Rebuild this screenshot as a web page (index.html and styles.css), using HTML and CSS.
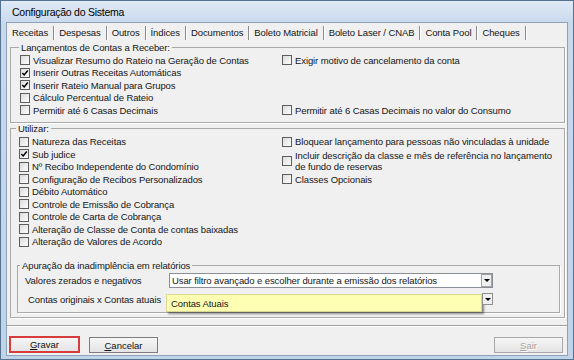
FILE: index.html
```html
<!DOCTYPE html>
<html lang="pt-BR">
<head>
  <meta charset="UTF-8" />
  <title>Configuração do Sistema</title>
  <link rel="stylesheet" href="styles.css">
</head>
<body>
  <div class="window">
    <div class="titlebar">Configuração do Sistema</div>
    <div class="client">
      <div class="tabs">
        <span class="tab active">Receitas</span>
        <span class="tab">Despesas</span>
        <span class="tab">Outros</span>
        <span class="tab">Índices</span>
        <span class="tab">Documentos</span>
        <span class="tab">Boleto Matricial</span>
        <span class="tab">Boleto Laser / CNAB</span>
        <span class="tab">Conta Pool</span>
        <span class="tab">Cheques</span>
      </div>

      <div class="page">
        <fieldset class="group lanc">
          <legend>Lançamentos de Contas a Receber:</legend>
          <div class="cols">
            <div class="col left">
              <label class="chk"><span class="box"></span>Visualizar Resumo do Rateio na Geração de Contas</label>
              <label class="chk"><span class="box on"><svg viewBox="0 0 8 8"><path d="M1.3 3.9 L3.2 5.9 L6.8 1.5"/></svg></span>Inserir Outras Receitas Automáticas</label>
              <label class="chk"><span class="box on"><svg viewBox="0 0 8 8"><path d="M1.3 3.9 L3.2 5.9 L6.8 1.5"/></svg></span>Inserir Rateio Manual para Grupos</label>
              <label class="chk"><span class="box"></span>Cálculo Percentual de Rateio</label>
              <label class="chk"><span class="box"></span>Permitir até 6 Casas Decimais</label>
            </div>
            <div class="col right spread">
              <label class="chk"><span class="box"></span>Exigir motivo de cancelamento da conta</label>
              <label class="chk"><span class="box"></span>Permitir até 6 Casas Decimais no valor do Consumo</label>
            </div>
          </div>
        </fieldset>

        <fieldset class="group util">
          <legend>Utilizar:</legend>
          <div class="cols">
            <div class="col left">
              <label class="chk"><span class="box"></span>Natureza das Receitas</label>
              <label class="chk"><span class="box on"><svg viewBox="0 0 8 8"><path d="M1.3 3.9 L3.2 5.9 L6.8 1.5"/></svg></span>Sub judice</label>
              <label class="chk"><span class="box"></span>Nº Recibo Independente do Condomínio</label>
              <label class="chk"><span class="box"></span>Configuração de Recibos Personalizados</label>
              <label class="chk"><span class="box"></span>Débito Automático</label>
              <label class="chk"><span class="box"></span>Controle de Emissão de Cobrança</label>
              <label class="chk"><span class="box"></span>Controle de Carta de Cobrança</label>
              <label class="chk"><span class="box"></span>Alteração de Classe de Conta de contas baixadas</label>
              <label class="chk"><span class="box"></span>Alteração de Valores de Acordo</label>
            </div>
            <div class="col right">
              <label class="chk"><span class="box"></span>Bloquear lançamento para pessoas não vinculadas à unidade</label>
              <label class="chk tall"><span class="box"></span><span>Incluir descrição da classe e mês de referência no lançamento<br>de fundo de reservas</span></label>
              <label class="chk"><span class="box"></span>Classes Opcionais</label>
            </div>
          </div>

          <fieldset class="group apur">
            <legend>Apuração da inadimplência em relatórios</legend>
            <div class="field">
              <span class="field-label">Valores zerados e negativos</span>
              <div class="combo">
                <span class="combo-text">Usar filtro avançado e escolher durante a emissão dos relatórios</span>
                <span class="drop"></span>
              </div>
            </div>
            <div class="field second">
              <span class="field-label">Contas originais x Contas atuais</span>
              <div class="combo focus">
                <span class="combo-text">Contas Atuais</span>
                <span class="drop"></span>
              </div>
            </div>
          </fieldset>
        </fieldset>
      </div>

      <div class="footer">
        <button class="btn mark"><u>G</u>ravar</button>
        <button class="btn"><u>C</u>ancelar</button>
        <button class="btn off"><u>S</u>air</button>
      </div>
    </div>
  </div>
</body>
</html>
```

FILE: styles.css
```css
* { box-sizing: border-box; }
body {
  margin: 0;
  font-family: "Liberation Sans", Arial, sans-serif;
  font-size: 9.5px;
  letter-spacing: -0.1px;
  color: #151515;
}

.window {
  width: 574px;
  height: 360px;
  border: 1px solid #56728f;
  background: linear-gradient(#dfeaf6, #c9d9ec 22px, #bfd3e9);
  padding: 0 5px 3px;
  display: flex;
  flex-direction: column;
}
.titlebar {
  height: 21px;
  line-height: 22px;
  padding-left: 6px;
  font-size: 10.5px;
  letter-spacing: -0.25px;
  color: #000;
}
.client {
  flex: 1;
  display: flex;
  flex-direction: column;
  background: #f0f0f0;
  border: 1px solid #8ea3ba;
}

/* abas */
.tabs { height: 19px; display: flex; align-items: center; }
.tab {
  padding: 0 5px;
  line-height: 14px;
  border-right: 1px solid #8a8a8a;
  box-shadow: 1px 0 0 #fff;
}

/* pagina */
.page { flex: 1; padding: 0 2px 0 3px; }
.group {
  margin: 0;
  min-width: 0;
  border: 1px solid #a9a9a9;
  box-shadow: 1px 1px 0 #fff;
}
.group legend { line-height: 11px; padding: 0 2px; }

.lanc { padding: 1px 4px 5px 9px; }
.lanc legend { margin-left: -1px; }
.lanc .left { width: 262px; }

.util { padding: 2px 4px 4px 8px; }
.util legend { margin-left: -3px; }
.util .left { width: 263px; }

.cols { display: flex; }
.col { display: flex; flex-direction: column; }
.spread { justify-content: space-between; }

.chk {
  display: flex;
  align-items: center;
  gap: 3px;
  height: 12.5px;
  white-space: nowrap;
}
.chk.tall { height: 25px; line-height: 11px; }
.box {
  flex: none;
  width: 10px;
  height: 10px;
  border: 1px solid #5d5d5d;
  background: linear-gradient(135deg, #dcdcdc, #fdfdfd);
  display: flex;
}
.box svg { width: 8px; height: 8px; }
.box path { fill: none; stroke: #000; stroke-width: 1.5; }

/* apuracao */
.apur { margin: 11.5px 0 0 -2px; padding: 2.5px 0 0 7px; }
.apur legend { margin-left: -5px; }
.field { display: flex; align-items: center; height: 15px; }
.field.second { margin-top: 5px; height: 19px; align-items: flex-start; }
.field-label { width: 144px; }
.second .field-label { line-height: 12px; margin-top: 1px; padding-left: 3px; }

.combo {
  width: 324px;
  height: 15px;
  display: flex;
  align-items: center;
  background: #fff;
  border: 1px solid #8a8f96;
}
.combo-text { flex: 1; padding-left: 2px; }
.drop {
  width: 11px;
  height: 13px;
  border: 1px solid #a3a3a3;
  background: #f0f0f0;
  display: flex;
  align-items: center;
  justify-content: center;
}
.drop::after {
  content: "";
  border-left: 3px solid transparent;
  border-right: 3px solid transparent;
  border-top: 3px solid #000;
}
.combo.focus {
  width: 327px;
  height: 19px;
  margin-left: -3px;
  align-items: flex-start;
  background: none;
  border: none;
}
.focus .combo-text {
  height: 18px;
  margin-top: 1px;
  line-height: 17px;
  padding-left: 4px;
  background: #ffffb4;
  border: 1px solid #d8d890;
  box-shadow: 2px 2px 2px rgba(0, 0, 0, 0.45);
}
.focus .drop { height: 12px; border-color: #8f8f8f; }

/* rodape */
.footer {
  height: 30px;
  display: flex;
  align-items: flex-start;
  padding: 10px 4px 0 2px;
  border-top: 1px solid #a0a0a0;
  box-shadow: inset 0 1px 0 #fff;
}
.btn {
  width: 69px;
  height: 16px;
  margin: 1px 0 0 9px;
  padding: 0;
  font: inherit;
  color: #111;
  border: 1px solid #7d7d7d;
  border-radius: 0;
  background: linear-gradient(#f6f6f6, #e4e4e4);
}
.btn u { text-underline-offset: 1px; }
.btn.mark {
  width: 71px;
  height: 17px;
  margin: 0;
  border: 2px solid #d63c3c;
}
.btn.off {
  margin-left: auto;
  color: #a3a3a3;
  text-shadow: 1px 1px 0 #fff;
  border-color: #a8a8a8;
}
```
